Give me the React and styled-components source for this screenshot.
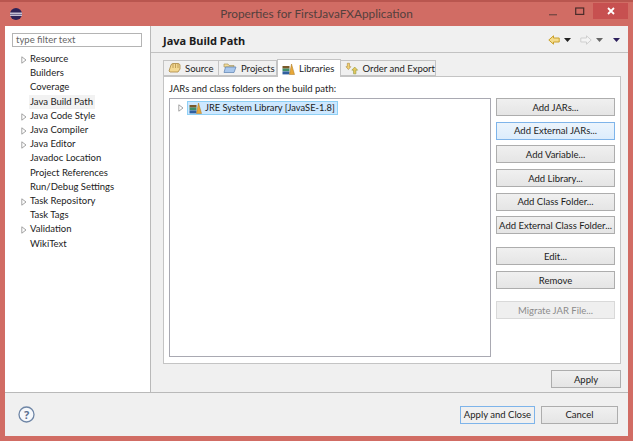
import React from 'react'
import styled, { createGlobalStyle } from 'styled-components'

const Global = createGlobalStyle`
  html, body { margin: 0; padding: 0; background: #d16c64; }
  * { box-sizing: border-box; }
`

const Frame = styled.div`
  width: 633px;
  height: 441px;
  background: #d16c64;
  border-top: 2px solid #b9564f;
  padding: 0 5px 5px;
  display: flex;
  flex-direction: column;
  font-family: "Lato", "Noto Sans", sans-serif;
  font-size: 9.5px;
  color: #1c1c1c;
`

const TitleBar = styled.div`
  height: 24px;
  flex: none;
  position: relative;
  display: flex;
  align-items: center;
  justify-content: center;
  font-size: 11.8px;
  color: #54403d;
  padding-bottom: 1px;
`

const AppIcon = styled.svg`
  position: absolute;
  left: 4px;
  top: 5px;
`

const WinButtons = styled.div`
  position: absolute;
  right: 0;
  top: 1px;
  display: flex;
  align-items: flex-start;
`

const WinButton = styled.div`
  width: ${p => p.$w}px;
  height: 16px;
  display: flex;
  align-items: center;
  justify-content: center;
  background: ${p => p.$close ? '#c75050' : 'transparent'};
  color: #fff;
`

const Body = styled.div`
  flex: 1;
  background: #f0f0f0;
  display: flex;
  flex-direction: column;
  min-height: 0;
`

const Main = styled.div`
  height: 367px;
  flex: none;
  display: flex;
  border-bottom: 1px solid #b9b9b9;
`

const Sidebar = styled.div`
  width: 146px;
  flex: none;
  background: #fff;
  border-right: 1px solid #b9b9b9;
  padding: 7px 7px 0;
`

const Filter = styled.div`
  height: 14px;
  width: 130px;
  border: 1px solid #b4b4b4;
  background: #fff;
  color: #666;
  line-height: 12px;
  padding-left: 3px;
  margin-bottom: 5px;
`

const Tree = styled.div`
  display: flex;
  flex-direction: column;
`

const TreeRow = styled.div`
  height: 14.2px;
  line-height: 14px;
  padding-left: 7px;
  display: flex;
  align-items: center;
  position: relative;
`

const CaretIcon = styled.svg`
  flex: none;
  position: ${p => p.$abs ? 'absolute' : 'static'};
  left: 9px;
  top: 4px;
`

const RowText = styled.span`
  margin-left: 10px;
  padding: 0 2px 0 1px;
  background: ${p => p.$on ? '#f2f2f2' : 'transparent'};
`

const Content = styled.div`
  flex: 1;
  display: flex;
  flex-direction: column;
  min-width: 0;
`

const Header = styled.div`
  height: 27px;
  flex: none;
  display: flex;
  align-items: center;
  justify-content: space-between;
  border-bottom: 1px solid #c2c2c2;
  padding: 2px 8px 0 12px;
`

const Heading = styled.div`
  font-family: "Noto Sans", sans-serif;
  font-weight: 700;
  font-size: 11px;
  color: #1c1c1c;
`

const NavIcons = styled.div`
  display: flex;
  align-items: center;
  gap: 4px;
`

const Pane = styled.div`
  flex: 1;
  padding: 7px 7px 0 12px;
  display: flex;
  flex-direction: column;
`

const Tabs = styled.div`
  display: flex;
  height: 16px;
  flex: none;
  align-items: flex-end;
  position: relative;
  z-index: 1;
`

const Tab = styled.div`
  height: ${p => p.$on ? 18 : 16}px;
  width: ${p => p.$w}px;
  padding-left: 4px;
  display: flex;
  align-items: center;
  gap: 4px;
  white-space: nowrap;
  border: 1px solid #c4c4c4;
  border-left-width: ${p => p.$on ? 1 : 0}px;
  border-bottom-width: ${p => p.$on ? 0 : 1}px;
  background: ${p => p.$on ? '#fff' : '#f0f0f0'};
  margin-bottom: ${p => p.$on ? -1 : 0}px;
  &:first-child { border-left-width: 1px; }
`

const TabBody = styled.div`
  height: 288px;
  flex: none;
  background: #fff;
  border: 1px solid #c4c4c4;
  padding: 6px 5px 6px;
  display: flex;
  flex-direction: column;
`

const Label = styled.div`
  height: 15px;
  line-height: 12px;
`

const Columns = styled.div`
  flex: 1;
  display: flex;
  gap: 5px;
  min-height: 0;
`

const ListBox = styled.div`
  width: 322px;
  flex: none;
  border: 1px solid #a9a9b2;
  background: #fff;
  padding: 1px 0 0 8px;
`

const LibRow = styled.div`
  display: flex;
  align-items: center;
  height: 15px;
`

const Selected = styled.div`
  margin-left: 3px;
  height: 14px;
  display: flex;
  align-items: center;
  gap: 3px;
  font-size: 9.3px;
  background: #cde8ff;
  border: 1px solid #8fd0f5;
  padding: 0 2px 0 1px;
`

const ButtonColumn = styled.div`
  width: 119px;
  flex: none;
  display: flex;
  flex-direction: column;
`

const Btn = styled.div`
  height: 18px;
  flex: none;
  width: ${p => p.$w ? `${p.$w}px` : '100%'};
  margin-bottom: ${p => p.$mb ?? 5.7}px;
  display: flex;
  align-items: center;
  justify-content: center;
  white-space: nowrap;
  color: ${p => p.$disabled ? '#8b8b8b' : '#1c1c1c'};
  border: 1px solid ${p => p.$active ? '#7eb4ea' : p.$disabled ? '#d9d9d9' : '#adadad'};
  background: ${p => p.$hover ? 'linear-gradient(#ecf4fc, #dcecfc)' : p.$active ? '#f0f0f0' : p.$disabled ? '#efefef' : 'linear-gradient(#f0f0f0, #e5e5e5)'};
`

const ApplyRow = styled.div`
  display: flex;
  justify-content: flex-end;
  margin-top: 6px;
`

const Footer = styled.div`
  flex: 1;
  display: flex;
  align-items: center;
  justify-content: space-between;
  padding: 0 10px 0 13px;
`

const FooterBtns = styled.div`
  display: flex;
  gap: 6px;
`

const Caret = ({ abs }) => (
  <CaretIcon $abs={abs} width="6" height="8" viewBox="0 0 6 8">
    <path d="M0.8 0.8 L5 4 L0.8 7.2 Z" fill="#fff" stroke="#9a9a9a" strokeWidth="0.9" />
  </CaretIcon>
)

const Books = () => (
  <svg width="13" height="12" viewBox="0 0 13 12">
    <rect x="0.5" y="3" width="7" height="2.6" fill="#7a5a2a" />
    <rect x="0.5" y="5.6" width="7" height="2.6" fill="#3f8f6a" />
    <rect x="0.5" y="8.4" width="7" height="3" fill="#2f5f9f" />
    <path d="M7.5 11.5 L9.5 1 L12.5 11.5 Z" fill="#e8a838" stroke="#a87620" strokeWidth="0.5" />
  </svg>
)

const SourceIcon = () => (
  <svg width="13" height="12" viewBox="0 0 13 12">
    <path d="M1 9 L3 3 Q3.5 1.5 5 1.5 H10 Q11.5 1.5 12 3 L12 7 L10 10 H2 Z" fill="#f3d892" stroke="#a98640" strokeWidth="0.8" />
    <path d="M5 2 V6 M7.5 2 V6 M10 2 V6" stroke="#a98640" strokeWidth="0.7" />
  </svg>
)

const FolderIcon = () => (
  <svg width="14" height="12" viewBox="0 0 14 12">
    <path d="M1 2 H5 L6 3.5 H11 V5 H1 Z" fill="#f4dc9a" stroke="#9a8a50" strokeWidth="0.6" />
    <path d="M1 10.5 L2.5 5 H13 L11 10.5 Z" fill="#a9c7ec" stroke="#5a7fb0" strokeWidth="0.7" />
  </svg>
)

const OrderIcon = () => (
  <svg width="14" height="13" viewBox="0 0 14 13">
    <path d="M3.5 1 L6 4 H4.6 V7.5 H2.4 V4 H1 Z" transform="rotate(180 3.5 4.3)" fill="#f3d272" stroke="#a9873a" strokeWidth="0.6" />
    <path d="M10 5 L13 8.2 H11.2 V12 H8.8 V8.2 H7 Z" fill="#e9c65a" stroke="#8a9a3a" strokeWidth="0.6" />
  </svg>
)

const Arrow = ({ flip, fill, stroke }) => (
  <svg width="12" height="10" viewBox="0 0 12 10" style={flip ? { transform: 'scaleX(-1)' } : undefined}>
    <path d="M0.8 5 L5.5 0.8 V3 H11.2 V7 H5.5 V9.2 Z" fill={fill} stroke={stroke} strokeWidth="1" />
  </svg>
)

const Drop = ({ color }) => (
  <svg width="7" height="4" viewBox="0 0 7 4"><path d="M0 0 H7 L3.5 4 Z" fill={color} /></svg>
)

const Spacer = styled.span`
  width: ${p => p.$w}px;
  flex: none;
`

const sideItems = [
  ['Resource', true], ['Builders'], ['Coverage'], ['Java Build Path', false, true],
  ['Java Code Style', true], ['Java Compiler', true], ['Java Editor', true],
  ['Javadoc Location'], ['Project References'], ['Run/Debug Settings'],
  ['Task Repository', true], ['Task Tags'], ['Validation', true], ['WikiText'],
]

export default function App() {
  return (
    <>
      <Global />
      <Frame>
        <TitleBar>
          <AppIcon width="14" height="14" viewBox="0 0 14 14">
            <circle cx="7" cy="7" r="6" fill="#2c2358" />
            <rect x="1" y="5.6" width="12" height="1.2" fill="#e9e6f2" />
            <rect x="1" y="7.6" width="12" height="1.2" fill="#e9e6f2" />
          </AppIcon>
          Properties for FirstJavaFXApplication
          <WinButtons>
            <WinButton $w={27}>
              <svg width="9" height="9" viewBox="0 0 9 9"><rect x="0" y="7" width="8" height="1.4" fill="#7c4a45" /></svg>
            </WinButton>
            <WinButton $w={26}>
              <svg width="10" height="9" viewBox="0 0 10 9"><rect x="0.7" y="1" width="8" height="6.4" fill="none" stroke="#4a2c2a" strokeWidth="1.2" /></svg>
            </WinButton>
            <WinButton $w={35} $close>
              <svg width="8" height="8" viewBox="0 0 8 8"><path d="M1 1 L7 7 M7 1 L1 7" stroke="#fff" strokeWidth="1.8" /></svg>
            </WinButton>
          </WinButtons>
        </TitleBar>
        <Body>
          <Main>
            <Sidebar>
              <Filter>type filter text</Filter>
              <Tree>
                {sideItems.map(([name, caret, on]) => (
                  <TreeRow key={name}>
                    {caret && <Caret abs />}
                    <RowText $on={on}>{name}</RowText>
                  </TreeRow>
                ))}
              </Tree>
            </Sidebar>
            <Content>
              <Header>
                <Heading>Java Build Path</Heading>
                <NavIcons>
                  <Arrow fill="#f5dc8c" stroke="#c9a02c" />
                  <Drop color="#222" />
                  <Spacer $w={1} />
                  <Arrow flip fill="#f4f4f4" stroke="#cfcfcf" />
                  <Drop color="#666" />
                  <Spacer $w={2} />
                  <Drop color="#2c1f5c" />
                </NavIcons>
              </Header>
              <Pane>
                <Tabs>
                  <Tab $w={56}><SourceIcon />Source</Tab>
                  <Tab $w={58}><FolderIcon />Projects</Tab>
                  <Tab $w={64} $on><Books />Libraries</Tab>
                  <Tab $w={95}><OrderIcon />Order and Export</Tab>
                </Tabs>
                <TabBody>
                  <Label>JARs and class folders on the build path:</Label>
                  <Columns>
                    <ListBox>
                      <LibRow>
                        <Caret />
                        <Selected><Books />JRE System Library [JavaSE-1.8]</Selected>
                      </LibRow>
                    </ListBox>
                    <ButtonColumn>
                      <Btn>Add JARs...</Btn>
                      <Btn $hover $active>Add External JARs...</Btn>
                      <Btn>Add Variable...</Btn>
                      <Btn>Add Library...</Btn>
                      <Btn>Add Class Folder...</Btn>
                      <Btn $mb={13}>Add External Class Folder...</Btn>
                      <Btn>Edit...</Btn>
                      <Btn $mb={12}>Remove</Btn>
                      <Btn $disabled>Migrate JAR File...</Btn>
                    </ButtonColumn>
                  </Columns>
                </TabBody>
                <ApplyRow><Btn $w={70} $mb={0}>Apply</Btn></ApplyRow>
              </Pane>
            </Content>
          </Main>
          <Footer>
            <svg width="17" height="17" viewBox="0 0 17 17">
              <circle cx="8.5" cy="8.5" r="7.5" fill="#f6f8fb" stroke="#6f86a6" strokeWidth="1.3" />
              <text x="8.5" y="12.5" textAnchor="middle" fontSize="11" fontWeight="700" fill="#5b7090" fontFamily="Noto Sans, sans-serif">?</text>
            </svg>
            <FooterBtns>
              <Btn $w={75} $mb={0} $active>Apply and Close</Btn>
              <Btn $w={77} $mb={0}>Cancel</Btn>
            </FooterBtns>
          </Footer>
        </Body>
      </Frame>
    </>
  )
}
